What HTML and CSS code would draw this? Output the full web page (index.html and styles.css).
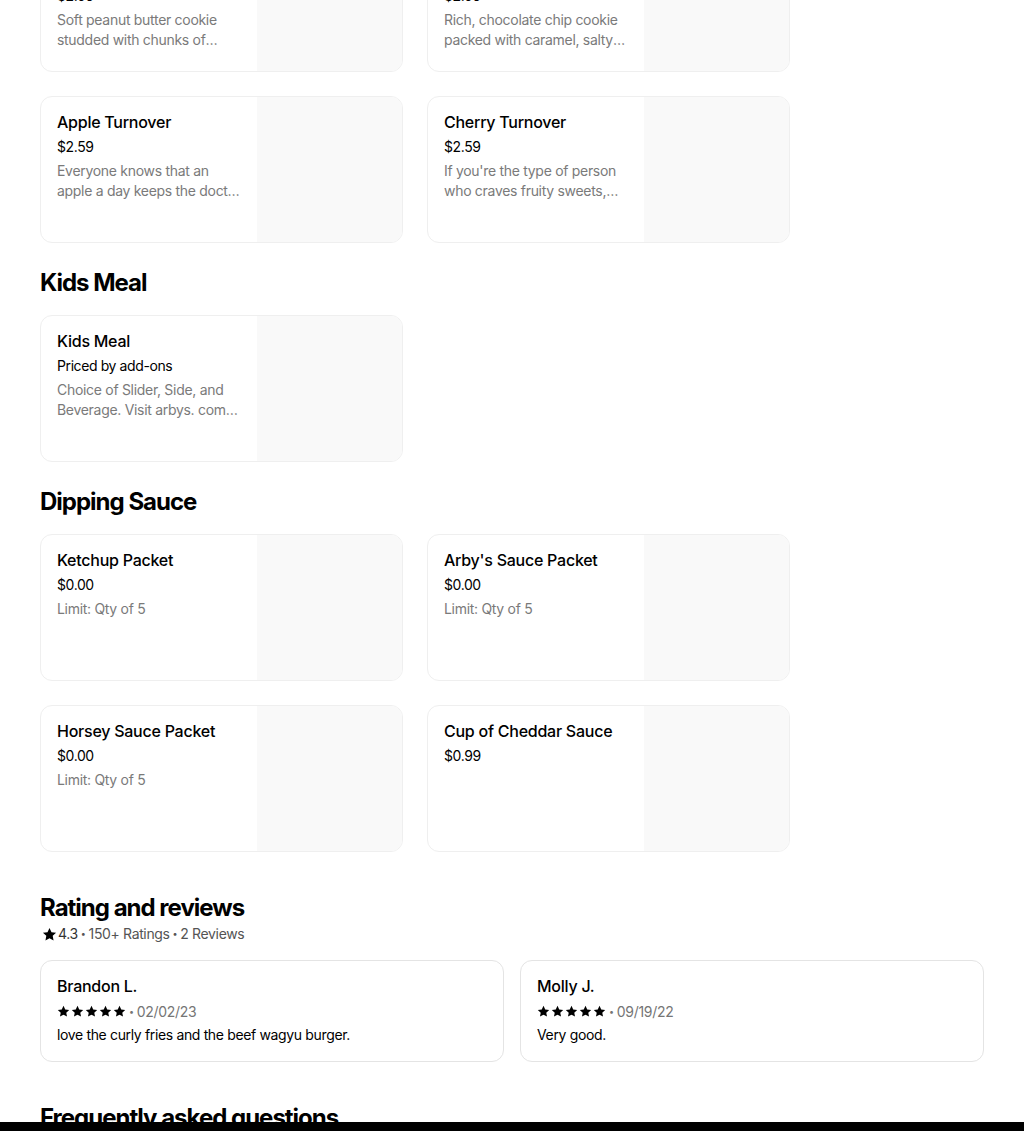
FILE: index.html
```html
<!DOCTYPE html>
<html lang="en">
<head>
<meta charset="utf-8">
<title>Menu</title>
<link rel="stylesheet" href="styles.css">
</head>
<body>
<main class="page">
  <section class="section section-first">
    <div class="menu-grid">
      <div class="item-card">
        <div class="item-text">
          <div class="item-title">Peanut Butter Cookie<br>(1 ct)</div>
          <div class="item-price">$2.09</div>
          <div class="item-desc">Soft peanut butter cookie studded with chunks of peanut butter cups.</div>
        </div>
        <div class="item-img"></div>
      </div>
      <div class="item-card">
        <div class="item-text">
          <div class="item-title">Salted Caramel Cookie<br>(1 ct)</div>
          <div class="item-price">$2.09</div>
          <div class="item-desc">Rich, chocolate chip cookie packed with caramel, salty pretzel pieces.</div>
        </div>
        <div class="item-img"></div>
      </div>
      <div class="item-card">
        <div class="item-text">
          <div class="item-title">Apple Turnover</div>
          <div class="item-price">$2.59</div>
          <div class="item-desc">Everyone knows that an apple a day keeps the doctor away, so treat yourself.</div>
        </div>
        <div class="item-img"></div>
      </div>
      <div class="item-card">
        <div class="item-text">
          <div class="item-title">Cherry Turnover</div>
          <div class="item-price">$2.59</div>
          <div class="item-desc">If you're the type of person who craves fruity sweets, this is for you.</div>
        </div>
        <div class="item-img"></div>
      </div>
    </div>
  </section>

  <section class="section">
    <h2 class="section-title">Kids Meal</h2>
    <div class="menu-grid">
      <div class="item-card">
        <div class="item-text">
          <div class="item-title">Kids Meal</div>
          <div class="item-price">Priced by add-ons</div>
          <div class="item-desc">Choice of Slider, Side, and Beverage. Visit arbys. com for nutrition information.</div>
        </div>
        <div class="item-img"></div>
      </div>
    </div>
  </section>

  <section class="section">
    <h2 class="section-title">Dipping Sauce</h2>
    <div class="menu-grid">
      <div class="item-card">
        <div class="item-text">
          <div class="item-title">Ketchup Packet</div>
          <div class="item-price">$0.00</div>
          <div class="item-desc">Limit: Qty of 5</div>
        </div>
        <div class="item-img"></div>
      </div>
      <div class="item-card">
        <div class="item-text">
          <div class="item-title">Arby's Sauce Packet</div>
          <div class="item-price">$0.00</div>
          <div class="item-desc">Limit: Qty of 5</div>
        </div>
        <div class="item-img"></div>
      </div>
      <div class="item-card">
        <div class="item-text">
          <div class="item-title">Horsey Sauce Packet</div>
          <div class="item-price">$0.00</div>
          <div class="item-desc">Limit: Qty of 5</div>
        </div>
        <div class="item-img"></div>
      </div>
      <div class="item-card">
        <div class="item-text">
          <div class="item-title">Cup of Cheddar Sauce</div>
          <div class="item-price">$0.99</div>
        </div>
        <div class="item-img"></div>
      </div>
    </div>
  </section>

  <section class="section reviews">
    <h2 class="section-title tight">Rating and reviews</h2>
    <div class="rating-line">
      <svg class="star-big" viewBox="0 0 24 24" aria-hidden="true"><polygon points="12,1.5 15.2,8.2 22.5,9.1 17.1,14.1 18.5,21.4 12,17.8 5.5,21.4 6.9,14.1 1.5,9.1 8.8,8.2"/></svg>
      <span class="rating-val">4.3</span><span class="dot">•</span><span>150+ Ratings</span><span class="dot">•</span><span>2 Reviews</span>
    </div>
    <div class="review-grid">
      <div class="review-card">
        <div class="review-name">Brandon L.</div>
        <div class="review-meta">
          <span class="stars">
            <svg viewBox="0 0 24 24"><polygon points="12,1.5 15.2,8.2 22.5,9.1 17.1,14.1 18.5,21.4 12,17.8 5.5,21.4 6.9,14.1 1.5,9.1 8.8,8.2"/></svg>
            <svg viewBox="0 0 24 24"><polygon points="12,1.5 15.2,8.2 22.5,9.1 17.1,14.1 18.5,21.4 12,17.8 5.5,21.4 6.9,14.1 1.5,9.1 8.8,8.2"/></svg>
            <svg viewBox="0 0 24 24"><polygon points="12,1.5 15.2,8.2 22.5,9.1 17.1,14.1 18.5,21.4 12,17.8 5.5,21.4 6.9,14.1 1.5,9.1 8.8,8.2"/></svg>
            <svg viewBox="0 0 24 24"><polygon points="12,1.5 15.2,8.2 22.5,9.1 17.1,14.1 18.5,21.4 12,17.8 5.5,21.4 6.9,14.1 1.5,9.1 8.8,8.2"/></svg>
            <svg viewBox="0 0 24 24"><polygon points="12,1.5 15.2,8.2 22.5,9.1 17.1,14.1 18.5,21.4 12,17.8 5.5,21.4 6.9,14.1 1.5,9.1 8.8,8.2"/></svg>
          </span>
          <span class="dot">•</span><span>02/02/23</span>
        </div>
        <div class="review-text">love the curly fries and the beef wagyu burger.</div>
      </div>
      <div class="review-card">
        <div class="review-name">Molly J.</div>
        <div class="review-meta">
          <span class="stars">
            <svg viewBox="0 0 24 24"><polygon points="12,1.5 15.2,8.2 22.5,9.1 17.1,14.1 18.5,21.4 12,17.8 5.5,21.4 6.9,14.1 1.5,9.1 8.8,8.2"/></svg>
            <svg viewBox="0 0 24 24"><polygon points="12,1.5 15.2,8.2 22.5,9.1 17.1,14.1 18.5,21.4 12,17.8 5.5,21.4 6.9,14.1 1.5,9.1 8.8,8.2"/></svg>
            <svg viewBox="0 0 24 24"><polygon points="12,1.5 15.2,8.2 22.5,9.1 17.1,14.1 18.5,21.4 12,17.8 5.5,21.4 6.9,14.1 1.5,9.1 8.8,8.2"/></svg>
            <svg viewBox="0 0 24 24"><polygon points="12,1.5 15.2,8.2 22.5,9.1 17.1,14.1 18.5,21.4 12,17.8 5.5,21.4 6.9,14.1 1.5,9.1 8.8,8.2"/></svg>
            <svg viewBox="0 0 24 24"><polygon points="12,1.5 15.2,8.2 22.5,9.1 17.1,14.1 18.5,21.4 12,17.8 5.5,21.4 6.9,14.1 1.5,9.1 8.8,8.2"/></svg>
          </span>
          <span class="dot">•</span><span>09/19/22</span>
        </div>
        <div class="review-text">Very good.</div>
      </div>
    </div>
  </section>

  <section class="section faq">
    <h2 class="section-title">Frequently asked questions</h2>
  </section>
</main>
<div class="bottom-bar"></div>
</body>
</html>
```

FILE: styles.css
```css
* { box-sizing: border-box; }

html, body {
  margin: 0;
  padding: 0;
  background: #ffffff;
  color: #000000;
  font-family: Inter, "Liberation Sans", Arial, sans-serif;
  overflow: hidden;
}

.page {
  width: 944px;
  margin: -75px 0 0 40px;
  display: flex;
  flex-direction: column;
}

.section {
  display: flex;
  flex-direction: column;
}

.section-title {
  margin: 24px 0 16px;
  font-size: 24px;
  line-height: 32px;
  font-weight: 700;
  letter-spacing: -1px;
}

.reviews .section-title,
.faq .section-title {
  margin-top: 40px;
}

.section-title.tight {
  margin-bottom: 0;
}

.menu-grid {
  display: grid;
  grid-template-columns: repeat(2, 363px);
  gap: 24px;
}

.item-card {
  display: flex;
  height: 147px;
  border: 1px solid #efefef;
  border-radius: 12px;
  overflow: hidden;
  background: #fff;
}

.item-text {
  flex: 1;
  min-width: 0;
  padding: 15px 16px;
  display: flex;
  flex-direction: column;
}

.item-title {
  font-size: 16px;
  line-height: 20px;
  font-weight: 500;
  color: #000;
  letter-spacing: -0.25px;
}

.item-price {
  margin-top: 5px;
  font-size: 14px;
  line-height: 20px;
  color: #000;
  letter-spacing: -0.4px;
}

.item-desc {
  margin-top: 4px;
  font-size: 14px;
  line-height: 20px;
  color: #7a7a7a;
  letter-spacing: -0.3px;
  display: -webkit-box;
  -webkit-line-clamp: 2;
  -webkit-box-orient: vertical;
  overflow: hidden;
}

.item-img {
  width: 145px;
  height: 145px;
  flex: none;
  background: #f9f9f9;
}

.rating-line {
  display: flex;
  align-items: center;
  height: 20px;
  font-size: 14px;
  line-height: 20px;
  color: #545454;
  letter-spacing: -0.35px;
}

.rating-val { color: #333; }

.star-big {
  width: 15px;
  height: 15px;
  margin: 0 1px 0 2px;
  fill: #000;
}

.dot {
  margin: 0 3px;
  font-size: 9px;
}

.review-grid {
  margin-top: 16px;
  display: grid;
  grid-template-columns: 1fr 1fr;
  gap: 16px;
}

.review-card {
  border: 1px solid #e4e4e4;
  border-radius: 12px;
  padding: 15px 16px;
  height: 102px;
}

.review-name {
  font-size: 16px;
  line-height: 20px;
  font-weight: 500;
  letter-spacing: -0.25px;
}

.review-meta {
  margin-top: 5px;
  display: flex;
  align-items: center;
  height: 20px;
  font-size: 14px;
  color: #757575;
  letter-spacing: -0.3px;
}

.stars {
  display: flex;
  gap: 1px;
}

.stars svg {
  width: 13px;
  height: 13px;
  fill: #000;
}

.review-text {
  margin-top: 4px;
  font-size: 14px;
  line-height: 20px;
  color: #000;
  letter-spacing: -0.35px;
}

.bottom-bar {
  position: fixed;
  left: 0;
  right: 0;
  bottom: 0;
  height: 9px;
  background: #000;
}
```
